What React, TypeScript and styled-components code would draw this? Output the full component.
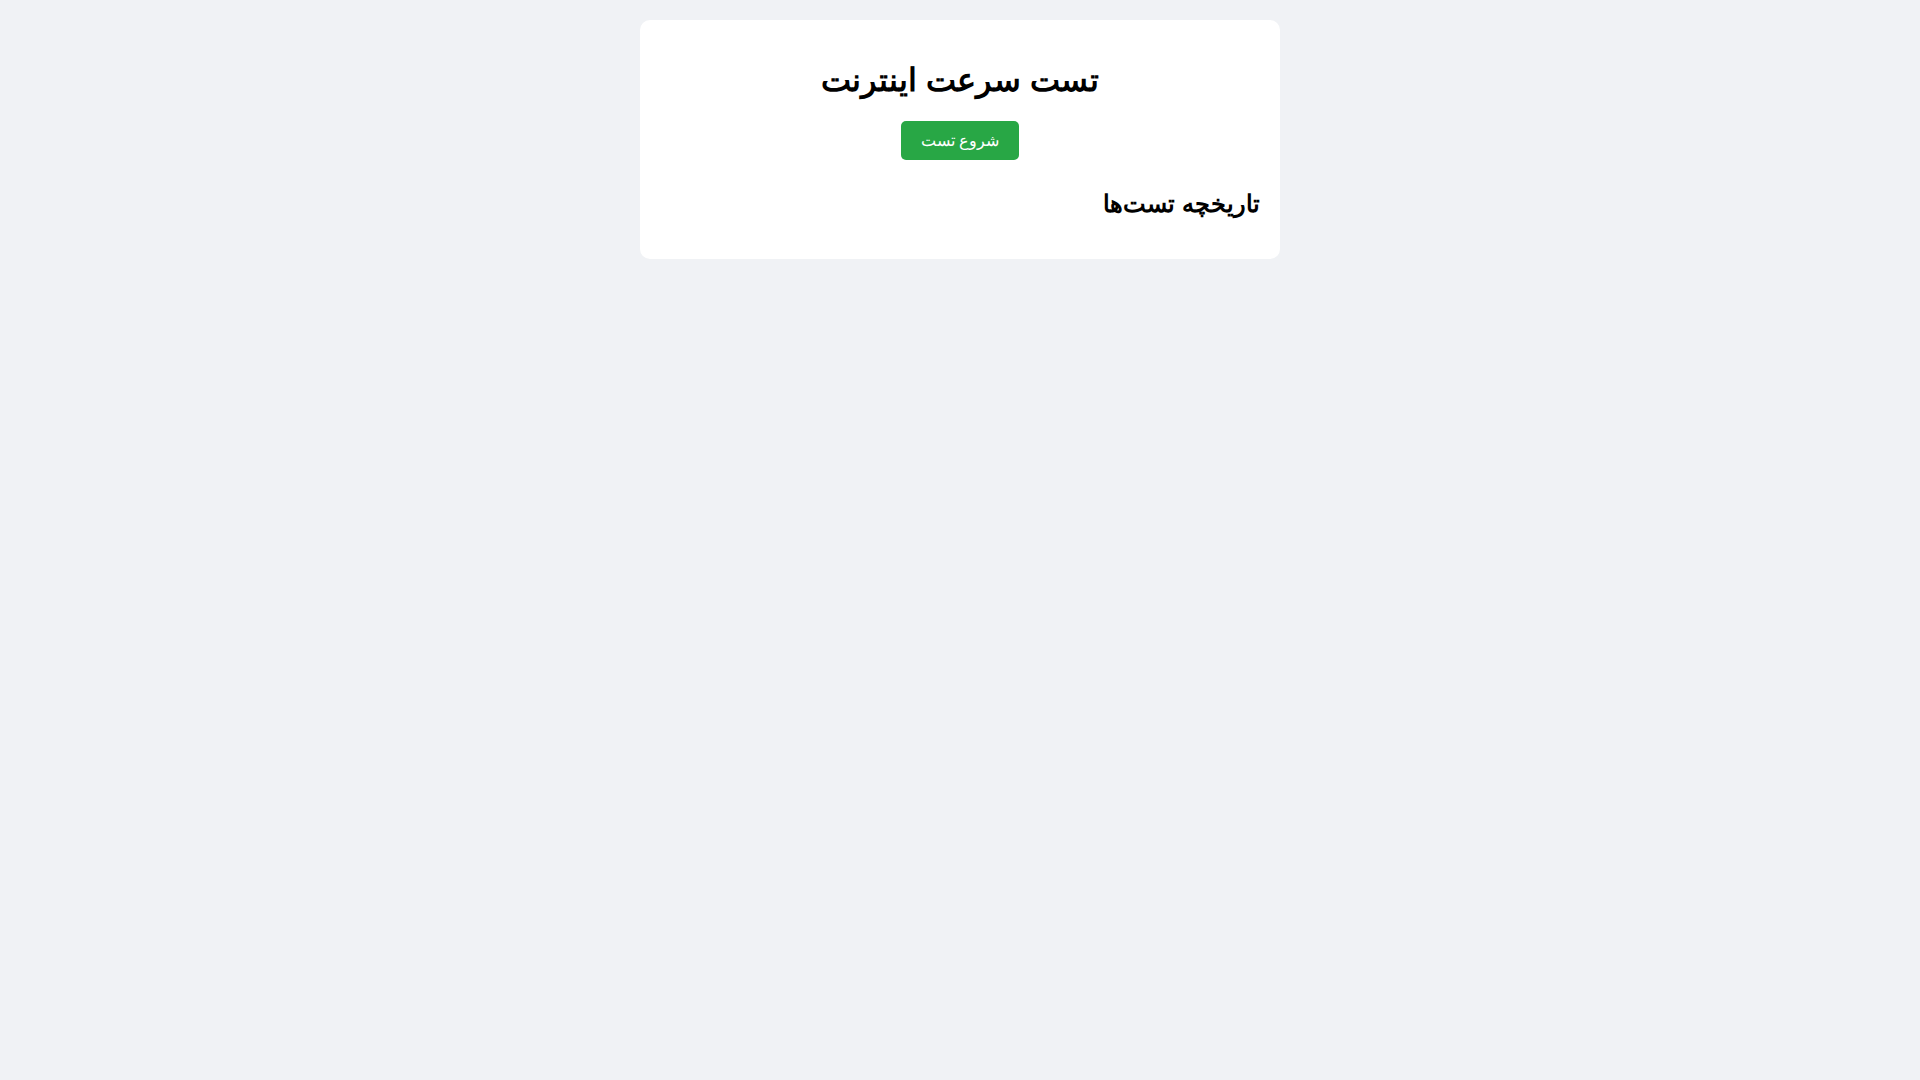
import React from 'react';
import styled, { createGlobalStyle } from 'styled-components';

const GlobalStyle = createGlobalStyle`
  body {
    margin: 0;
    background-color: #f0f2f5;
    font-family: Tahoma, Arial, sans-serif;
    direction: rtl;
  }
`;

const Card = styled.div`
  max-width: 600px;
  margin: 20px auto;
  padding: 20px;
  background-color: #ffffff;
  border-radius: 10px;
  text-align: center;
`;

const Title = styled.h1`
  font-size: 32px;
  margin: 21px 0 22px;
  color: #000;
`;

const StartButton = styled.button`
  background-color: #28a745;
  color: #ffffff;
  border: none;
  border-radius: 5px;
  padding: 10px 20px;
  font-size: 16px;
  font-family: inherit;
  cursor: pointer;
`;

const Result = styled.div``;

const HistoryTitle = styled.h2`
  font-size: 24px;
  margin: 30px 0 21px;
  text-align: right;
`;

const HistoryList = styled.ul`
  list-style: none;
  padding: 0;
  margin: 0;
`;

export default function App() {
  return (
    <>
      <GlobalStyle />
      <Card>
        <Title>تست سرعت اینترنت</Title>
        <StartButton>شروع تست</StartButton>
        <Result />
        <HistoryTitle>تاریخچه تست‌ها</HistoryTitle>
        <HistoryList />
      </Card>
    </>
  );
}
